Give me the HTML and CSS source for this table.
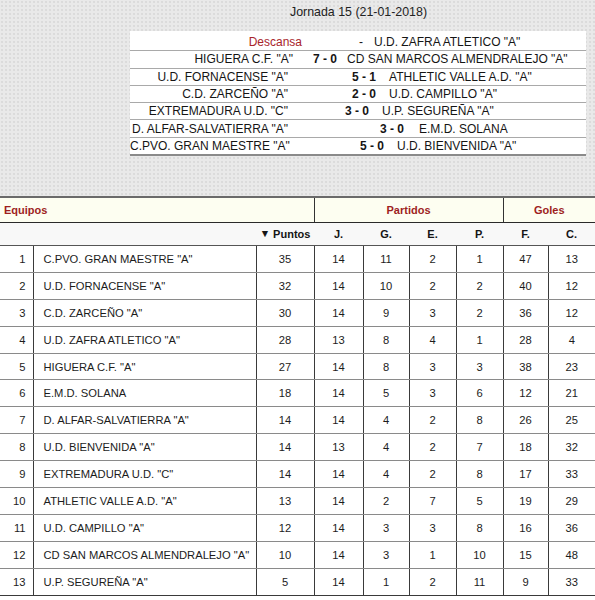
FILE: index.html
```html
<!DOCTYPE html>
<html lang="es">
<head>
<meta charset="utf-8">
<title>Jornada 15</title>
<link rel="stylesheet" href="styles.css">
</head>
<body>
<div class="top">
  <div class="title">Jornada 15 (21-01-2018)</div>
  <div class="fixtures">
    <div class="fx r-desc"><span class="home rest">Descansa</span><span class="score plain">-</span><span class="away">U.D. ZAFRA ATLETICO "A"</span></div>
    <div class="fx r-hig"><span class="home">HIGUERA C.F. "A"</span><span class="score">7 - 0</span><span class="away">CD SAN MARCOS ALMENDRALEJO "A"</span></div>
    <div class="fx r-forn"><span class="home">U.D. FORNACENSE "A"</span><span class="score">5 - 1</span><span class="away">ATHLETIC VALLE A.D. "A"</span></div>
    <div class="fx r-zarc"><span class="home">C.D. ZARCEÑO "A"</span><span class="score">2 - 0</span><span class="away">U.D. CAMPILLO "A"</span></div>
    <div class="fx r-extr"><span class="home">EXTREMADURA U.D. "C"</span><span class="score">3 - 0</span><span class="away">U.P. SEGUREÑA "A"</span></div>
    <div class="fx r-alfar"><span class="home">D. ALFAR-SALVATIERRA "A"</span><span class="score">3 - 0</span><span class="away">E.M.D. SOLANA</span></div>
    <div class="fx r-cpvo last"><span class="home">C.PVO. GRAN MAESTRE "A"</span><span class="score">5 - 0</span><span class="away">U.D. BIENVENIDA "A"</span></div>
  </div>
</div>
<table class="standings">
  <colgroup>
    <col class="c-rank"><col class="c-team"><col class="c-pts"><col class="c-j"><col class="c-g"><col class="c-e"><col class="c-p"><col class="c-f"><col class="c-c">
  </colgroup>
  <thead>
    <tr class="group">
      <th colspan="3" class="left">Equipos</th>
      <th colspan="4">Partidos</th>
      <th colspan="2">Goles</th>
    </tr>
    <tr class="cols">
      <th colspan="2"></th>
      <th><span class="arrow">&#9660;</span> Puntos</th>
      <th>J.</th><th>G.</th><th>E.</th><th>P.</th><th>F.</th><th>C.</th>
    </tr>
  </thead>
  <tbody>
    <tr><td class="rank">1</td><td class="team">C.PVO. GRAN MAESTRE "A"</td><td>35</td><td>14</td><td>11</td><td>2</td><td>1</td><td>47</td><td>13</td></tr>
    <tr><td class="rank">2</td><td class="team">U.D. FORNACENSE "A"</td><td>32</td><td>14</td><td>10</td><td>2</td><td>2</td><td>40</td><td>12</td></tr>
    <tr><td class="rank">3</td><td class="team">C.D. ZARCEÑO "A"</td><td>30</td><td>14</td><td>9</td><td>3</td><td>2</td><td>36</td><td>12</td></tr>
    <tr><td class="rank">4</td><td class="team">U.D. ZAFRA ATLETICO "A"</td><td>28</td><td>13</td><td>8</td><td>4</td><td>1</td><td>28</td><td>4</td></tr>
    <tr><td class="rank">5</td><td class="team">HIGUERA C.F. "A"</td><td>27</td><td>14</td><td>8</td><td>3</td><td>3</td><td>38</td><td>23</td></tr>
    <tr><td class="rank">6</td><td class="team">E.M.D. SOLANA</td><td>18</td><td>14</td><td>5</td><td>3</td><td>6</td><td>12</td><td>21</td></tr>
    <tr><td class="rank">7</td><td class="team">D. ALFAR-SALVATIERRA "A"</td><td>14</td><td>14</td><td>4</td><td>2</td><td>8</td><td>26</td><td>25</td></tr>
    <tr><td class="rank">8</td><td class="team">U.D. BIENVENIDA "A"</td><td>14</td><td>13</td><td>4</td><td>2</td><td>7</td><td>18</td><td>32</td></tr>
    <tr><td class="rank">9</td><td class="team">EXTREMADURA U.D. "C"</td><td>14</td><td>14</td><td>4</td><td>2</td><td>8</td><td>17</td><td>33</td></tr>
    <tr><td class="rank">10</td><td class="team">ATHLETIC VALLE A.D. "A"</td><td>13</td><td>14</td><td>2</td><td>7</td><td>5</td><td>19</td><td>29</td></tr>
    <tr><td class="rank">11</td><td class="team">U.D. CAMPILLO "A"</td><td>12</td><td>14</td><td>3</td><td>3</td><td>8</td><td>16</td><td>36</td></tr>
    <tr><td class="rank">12</td><td class="team">CD SAN MARCOS ALMENDRALEJO "A"</td><td>10</td><td>14</td><td>3</td><td>1</td><td>10</td><td>15</td><td>48</td></tr>
    <tr><td class="rank">13</td><td class="team">U.P. SEGUREÑA "A"</td><td>5</td><td>14</td><td>1</td><td>2</td><td>11</td><td>9</td><td>33</td></tr>
  </tbody>
</table>
</body>
</html>
```

FILE: styles.css
```css
html, body {
  margin: 0;
  padding: 0;
  background: #ffffff;
  font-family: "Liberation Sans", Arial, sans-serif;
  color: #1a1a1a;
}

.top {
  height: 196px;
  box-sizing: border-box;
  padding-top: 5px;
  background-color: #e9e9e9;
  background-image: radial-gradient(circle, #dadada 0.7px, transparent 1.1px);
  background-size: 4px 4px;
}

.title {
  font-size: 12.4px;
  line-height: 14px;
  height: 14px;
  text-align: center;
  padding-left: 122px;
  color: #222;
}

.fixtures {
  margin: 12px 0 0 130px;
  padding-top: 3px;
  width: 456px;
  background: #ffffff;
}

.fx {
  display: flex;
  align-items: center;
  height: 16.3px;
  border-bottom: 1px solid #a9a9a9;
  font-size: 12px;
  white-space: nowrap;
  color: #151515;
}

.fx.last {
  border-bottom: 2px solid #8a8a8a;
}

.fx .home {
  flex: none;
  width: 158px;
  text-align: right;
}

.fx .rest {
  color: #a8242a;
}

.fx .score {
  flex: none;
  font-weight: bold;
}

.fx .score.plain {
  font-weight: normal;
}

.r-desc .home { width: 172px; }
.r-desc .score { margin-left: 57px; }
.r-desc .away { margin-left: 11px; }

.r-hig .home { width: 163px; }
.r-hig .score { margin-left: 20px; }
.r-hig .away { margin-left: 10px; }

.r-forn .score, .r-zarc .score { margin-left: 64px; }
.r-forn .away, .r-zarc .away { margin-left: 13px; }

.r-extr .score { margin-left: 57px; }
.r-extr .away { margin-left: 13px; }

.r-alfar .score { margin-left: 92px; }
.r-alfar .away { margin-left: 15px; }

.r-cpvo .score { margin-left: 72px; }
.r-cpvo .away { margin-left: 13px; }

/* Standings */
.standings {
  width: 595px;
  table-layout: fixed;
  border-collapse: collapse;
  font-size: 11.2px;
  color: #1c1c1c;
}

.c-rank { width: 33px; }
.c-team { width: 223px; }
.c-pts { width: 58px; }
.c-j { width: 49px; }
.c-g { width: 46px; }
.c-e { width: 47px; }
.c-p { width: 47px; }
.c-f { width: 45px; }
.c-c { width: 47px; }

.group th {
  height: 24px;
  padding: 0;
  background: #fdfef1;
  color: #9e1f1f;
  font-size: 11px;
  font-weight: bold;
  text-align: center;
  border-top: 2px solid #6a6a6a;
  border-bottom: 1px solid #2a2a2a;
  border-left: 1px solid #333;
}

.group th.left {
  text-align: left;
  padding-left: 4px;
  border-left: none;
}

.cols th {
  height: 22px;
  padding: 0;
  background: #f8f8f8;
  font-size: 11px;
  font-weight: bold;
  color: #151515;
  text-align: center;
  border-bottom: 1px solid #555;
}

.arrow {
  font-size: 10.5px;
  position: relative;
  top: -1px;
}

tbody td {
  height: 25.9px;
  padding: 0;
  text-align: center;
  border-bottom: 1px solid #8a8a8a;
  border-left: 1px solid #3a3a3a;
  white-space: nowrap;
}

tbody tr:last-child td {
  border-bottom: 1px solid #3a3a3a;
}

tbody td.rank {
  border-left: none;
  text-align: right;
  padding-right: 7px;
}

tbody td.team {
  text-align: left;
  padding-left: 10px;
}
```
